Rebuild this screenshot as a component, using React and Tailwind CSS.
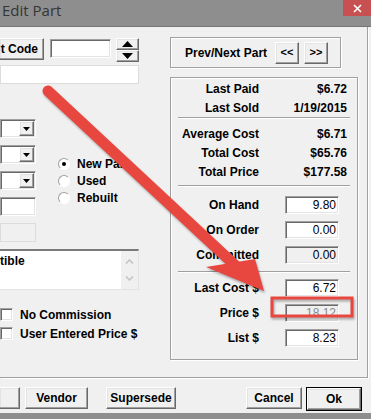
import React from 'react';

const font = "font-['Liberation_Sans',Arial,sans-serif]";

// windows classic bevels
const sunken =
  'border border-t-[#a0a0a0] border-l-[#a0a0a0] border-r-white border-b-white shadow-[inset_1px_1px_0_#696969,inset_-1px_-1px_0_#e3e3e3]';
const raised =
  'bg-[#f0f0f0] border border-t-white border-l-white border-r-[#696969] border-b-[#696969] shadow-[inset_-1px_-1px_0_#a0a0a0,inset_1px_1px_0_#e3e3e3]';
const etched = 'border border-[#a0a0a0] shadow-[inset_1px_1px_0_#fff,1px_1px_0_#fff]';

function Sep() {
  return <div className="mx-[7px] border-t border-[#a0a0a0] shadow-[0_1px_0_#fff]" />;
}

function Dropdown() {
  return (
    <div className={`h-[19px] w-[36px] bg-white ${sunken} flex justify-end items-stretch p-[1px]`}>
      <div className={`w-[15px] ${raised} flex items-center justify-center`}>
        <svg width="7" height="4" viewBox="0 0 7 4">
          <polygon points="0,0 7,0 3.5,4" fill="#000" />
        </svg>
      </div>
    </div>
  );
}

function Radio({ label, checked }) {
  return (
    <div className="h-[17px] flex items-center">
      <div className="w-[12px] h-[12px] rounded-full bg-white border border-t-[#a0a0a0] border-l-[#a0a0a0] border-r-white border-b-white flex items-center justify-center">
        {checked && <div className="w-[4px] h-[4px] rounded-full bg-black" />}
      </div>
      <span className="ml-[7px]">{label}</span>
    </div>
  );
}

function Check({ label }) {
  return (
    <div className="h-[19px] flex items-center">
      <div className={`w-[13px] h-[13px] bg-white ${sunken}`} />
      <span className="ml-[7px]">{label}</span>
    </div>
  );
}

function StatRow({ label, value }) {
  return (
    <div className="h-[19px] flex items-center">
      <div className="w-[88px] text-right">{label}</div>
      <div className="w-[88px] text-right">{value}</div>
    </div>
  );
}

function InputRow({ label, value, tone = 'white', className = '' }) {
  const box =
    tone === 'white'
      ? 'bg-white text-black'
      : tone === 'ro'
      ? 'bg-[#f0f0f0] text-black'
      : 'bg-[#f0f0f0] text-[#8a8a8a]';
  return (
    <div className={`h-[18px] flex items-center ${className}`}>
      <div className="w-[88px] text-right">{label}</div>
      <div
        className={`ml-[26px] w-[54px] h-[18px] ${box} ${sunken} flex items-center justify-end pr-[2px] font-normal text-[12px]`}
      >
        {value}
      </div>
    </div>
  );
}

function Button({ children, className = '' }) {
  return (
    <div className={`h-[22px] ${raised} flex items-center justify-center ${className}`}>{children}</div>
  );
}

export default function App() {
  return (
    <div
      className={`relative w-[371px] h-[419px] overflow-hidden bg-[#f0f0f0] text-[12px] font-bold leading-none text-black ${font} flex flex-col`}
    >
      {/* title bar */}
      <div className="h-[27px] shrink-0 bg-[#8e8e8e] border-b border-[#767676] flex justify-between items-start">
        <span className="pl-[2px] pt-[3px] text-[15px] font-normal text-[#353535] font-['Open_Sans',sans-serif]">
          Edit Part
        </span>
        <div className="w-[28px] h-[16px] bg-[#c75050] flex items-center justify-center">
          <svg width="9" height="9" viewBox="0 0 9 9">
            <path d="M1 1 L8 8 M8 1 L1 8" stroke="#fff" strokeWidth="1.6" />
          </svg>
        </div>
      </div>

      {/* main frame */}
      <div className="h-[351px] w-[368px] shrink-0 border-r border-b border-[#a0a0a0] shadow-[1px_1px_0_#fff] flex items-start pt-[10px]">
        {/* left column */}
        <div className="w-[139px] mt-[1px] flex flex-col">
          <div className="h-[24px] flex items-start">
            <Button className="w-[44px] h-[21px] border-l-0 justify-end pr-[5px]">t Code</Button>
            <div className={`ml-[6px] mt-[1px] w-[61px] h-[19px] bg-white ${sunken}`} />
            <div className="ml-[5px] w-[23px] flex flex-col">
              <div className={`h-[12px] ${raised} bg-[#dadada] flex items-center justify-center`}>
                <svg width="11" height="6" viewBox="0 0 11 6">
                  <polygon points="5.5,0 11,6 0,6" fill="#000" />
                </svg>
              </div>
              <div className={`h-[12px] ${raised} bg-[#c8c8c8] flex items-center justify-center`}>
                <svg width="11" height="6" viewBox="0 0 11 6">
                  <polygon points="0,0 11,0 5.5,6" fill="#000" />
                </svg>
              </div>
            </div>
          </div>
          <div className="mt-[3px] h-[19px] bg-white border border-[#dcdcdc]" />

          <div className="mt-[35px] flex items-start">
            <div className="w-[36px] flex flex-col gap-[7px]">
              <Dropdown />
              <Dropdown />
              <Dropdown />
              <div className={`h-[19px] bg-white ${sunken}`} />
              <div className="h-[19px] border border-[#dcdcdc] bg-[#f0f0f0]" />
            </div>
            <div className="ml-[22px] mt-[36px] flex flex-col">
              <Radio label="New Part" checked />
              <Radio label="Used" />
              <Radio label="Rebuilt" />
            </div>
          </div>

          <div className="mt-[7px] h-[41px] bg-white border-t-2 border-t-[#7a7a7a] border-r border-b border-[#e3e3e3] flex">
            <div className="flex-1 pt-[4px]">tible</div>
            <div className="w-[17px] bg-[#f0f0f0] flex flex-col items-center justify-between py-[8px]">
              <svg width="9" height="5" viewBox="0 0 9 5">
                <path d="M1 4.5 L4.5 1 L8 4.5" stroke="#c4c4c4" strokeWidth="1.6" fill="none" />
              </svg>
              <svg width="9" height="5" viewBox="0 0 9 5">
                <path d="M1 0.5 L4.5 4 L8 0.5" stroke="#c4c4c4" strokeWidth="1.6" fill="none" />
              </svg>
            </div>
          </div>

          <div className="mt-[15px] flex flex-col">
            <Check label="No Commission" />
            <Check label="User Entered Price $" />
          </div>
        </div>

        {/* right column */}
        <div className="ml-[31px] flex flex-col">
          <div className={`w-[171px] h-[31px] ${etched} flex items-center`}>
            <span className="ml-[14px]">Prev/Next Part</span>
            <Button className="ml-[8px] w-[24px] h-[22px] text-[11px]">&lt;&lt;</Button>
            <Button className="ml-[5px] w-[24px] h-[22px] text-[11px]">&gt;&gt;</Button>
          </div>

          <div className={`mt-[9px] w-[188px] h-[283px] ${etched} flex flex-col pt-[1px]`}>
            <StatRow label="Last Paid" value="$6.72" />
            <StatRow label="Last Sold" value="1/19/2015" />
            <Sep />
            <div className="mt-[6px]" />
            <StatRow label="Average Cost" value="$6.71" />
            <StatRow label="Total Cost" value="$65.76" />
            <StatRow label="Total Price" value="$177.58" />
            <div className="mt-[4px]" />
            <Sep />
            <InputRow className="mt-[10px]" label="On Hand" value="9.80" />
            <InputRow className="mt-[7px]" label="On Order" value="0.00" />
            <InputRow className="mt-[7px]" label="Committed" value="0.00" tone="ro" />
            <div className="mt-[7px]" />
            <Sep />
            <InputRow className="mt-[7px]" label="Last Cost $" value="6.72" />
            <InputRow className="mt-[7px]" label="Price $" value="18.12" tone="dis" />
            <InputRow className="mt-[7px]" label="List $" value="8.23" />
          </div>
        </div>
      </div>

      {/* buttons */}
      <div className="mt-[9px] flex">
        <Button className="w-[20px] border-l-0" />
        <Button className="ml-[5px] w-[63px]">Vendor</Button>
        <Button className="ml-[18px] w-[70px]">Supersede</Button>
        <Button className="ml-[70px] w-[56px]">Cancel</Button>
        <div className="ml-[4px] w-[56px] border border-black">
          <Button className="h-[20px]">Ok</Button>
        </div>
      </div>
      <div className="mt-auto h-[6px] bg-[#8e8e8e]" />

      {/* annotation overlay */}
      <svg
        className="absolute inset-0 pointer-events-none drop-shadow-[1px_2px_1px_rgba(0,0,0,0.3)]"
        width="371"
        height="419"
        viewBox="0 0 371 419"
      >
        <line x1="48" y1="91" x2="238" y2="268" stroke="#e8473f" strokeWidth="11" strokeLinecap="round" />
        <polygon points="264,291 206,267 255,259" fill="#e8473f" />
        <rect x="272" y="298" width="80" height="18" fill="none" stroke="#e8473f" strokeWidth="3" />
      </svg>
    </div>
  );
}
